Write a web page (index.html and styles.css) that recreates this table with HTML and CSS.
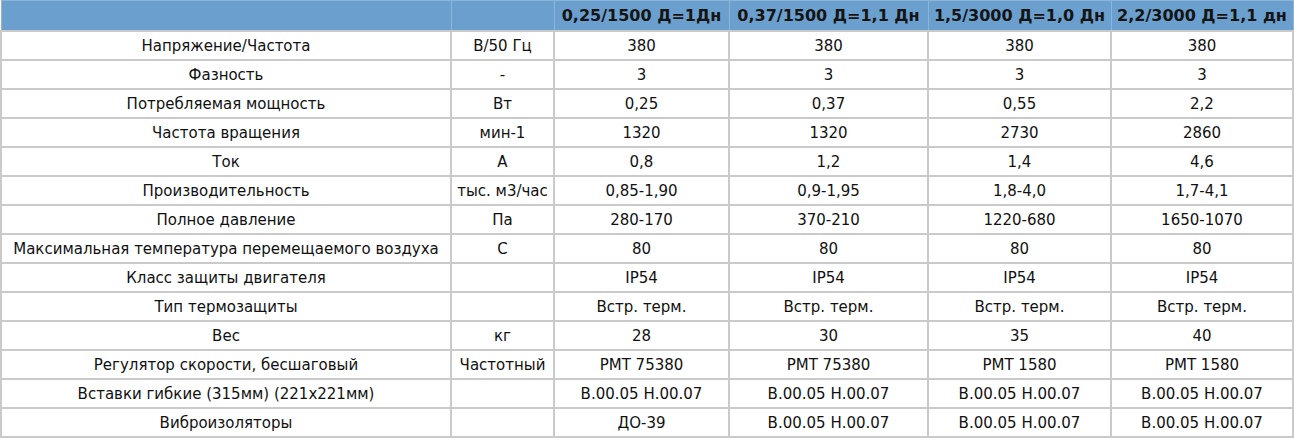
FILE: index.html
```html
<!DOCTYPE html>
<html lang="ru">
<head>
<meta charset="utf-8">
<title>Характеристики</title>
<link rel="stylesheet" href="styles.css">
</head>
<body>
<table class="spec">
  <colgroup>
    <col class="c-name"><col class="c-unit"><col class="c-v1"><col class="c-v2"><col class="c-v3"><col class="c-v4">
  </colgroup>
  <thead>
    <tr><th></th><th></th><th>0,25/1500 Д=1Дн</th><th>0,37/1500 Д=1,1 Дн</th><th>1,5/3000 Д=1,0 Дн</th><th>2,2/3000 Д=1,1 дн</th></tr>
  </thead>
  <tbody>
    <tr><td>Напряжение/Частота</td><td>В/50 Гц</td><td>380</td><td>380</td><td>380</td><td>380</td></tr>
    <tr><td>Фазность</td><td>-</td><td>3</td><td>3</td><td>3</td><td>3</td></tr>
    <tr><td>Потребляемая мощность</td><td>Вт</td><td>0,25</td><td>0,37</td><td>0,55</td><td>2,2</td></tr>
    <tr><td>Частота вращения</td><td>мин-1</td><td>1320</td><td>1320</td><td>2730</td><td>2860</td></tr>
    <tr><td>Ток</td><td>А</td><td>0,8</td><td>1,2</td><td>1,4</td><td>4,6</td></tr>
    <tr><td>Производительность</td><td>тыс. м3/час</td><td>0,85-1,90</td><td>0,9-1,95</td><td>1,8-4,0</td><td>1,7-4,1</td></tr>
    <tr><td>Полное давление</td><td>Па</td><td>280-170</td><td>370-210</td><td>1220-680</td><td>1650-1070</td></tr>
    <tr><td>Максимальная температура перемещаемого воздуха</td><td>С</td><td>80</td><td>80</td><td>80</td><td>80</td></tr>
    <tr><td>Класс защиты двигателя</td><td></td><td>IP54</td><td>IP54</td><td>IP54</td><td>IP54</td></tr>
    <tr><td>Тип термозащиты</td><td></td><td>Встр. терм.</td><td>Встр. терм.</td><td>Встр. терм.</td><td>Встр. терм.</td></tr>
    <tr><td>Вес</td><td>кг</td><td>28</td><td>30</td><td>35</td><td>40</td></tr>
    <tr><td>Регулятор скорости, бесшаговый</td><td>Частотный</td><td>РМТ 75380</td><td>РМТ 75380</td><td>РМТ 1580</td><td>РМТ 1580</td></tr>
    <tr><td>Вставки гибкие (315мм) (221х221мм)</td><td></td><td>В.00.05 Н.00.07</td><td>В.00.05 Н.00.07</td><td>В.00.05 Н.00.07</td><td>В.00.05 Н.00.07</td></tr>
    <tr><td>Виброизоляторы</td><td></td><td>ДО-39</td><td>В.00.05 Н.00.07</td><td>В.00.05 Н.00.07</td><td>В.00.05 Н.00.07</td></tr>
  </tbody>
</table>
</body>
</html>
```
FILE: styles.css
```css
html, body {
  margin: 0;
  padding: 0;
  background: #ffffff;
}
.spec {
  border-collapse: collapse;
  table-layout: fixed;
  width: 1292px;
  font-family: "DejaVu Sans", sans-serif;
  font-size: 15px;
  color: #111111;
}
.c-name { width: 450px; }
.c-unit { width: 103px; }
.c-v1 { width: 175px; }
.c-v2 { width: 199px; }
.c-v3 { width: 183px; }
.c-v4 { width: 182px; }
.spec th, .spec td {
  text-align: center;
  padding: 0;
  white-space: nowrap;
}
.spec th {
  height: 29px;
  background: #6b9fcd;
  border: 1px solid #8db5da;
  font-weight: bold;
  font-size: 16px;
  color: #141414;
}
.spec td {
  height: 27px;
  border: 2px solid #cacaca;
}
```
